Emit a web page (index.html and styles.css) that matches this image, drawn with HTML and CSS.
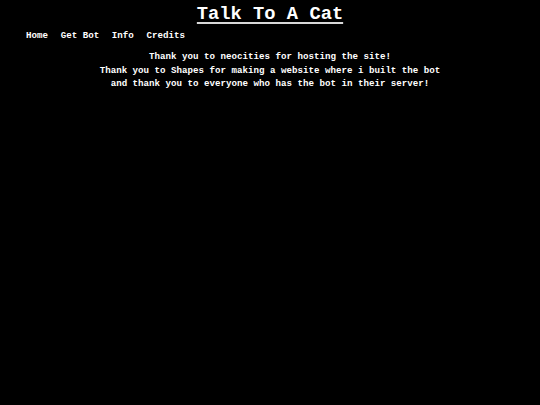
FILE: index.html
```html
<!DOCTYPE html>
<html>
<head>
<meta charset="utf-8">
<title>Talk To A Cat</title>
<link rel="stylesheet" href="styles.css">
</head>
<body>
<header class="top">
  <h1 class="title">Talk To A Cat</h1>
  <nav class="nav">
    <a class="nav-link" href="#">Home</a>
    <a class="nav-link" href="#">Get Bot</a>
    <a class="nav-link" href="#">Info</a>
    <a class="nav-link" href="#">Credits</a>
  </nav>
</header>
<main class="credits">
  <p class="line">Thank you to neocities for hosting the site!</p>
  <p class="line">Thank you to Shapes for making a website where i built the bot</p>
  <p class="line">and thank you to everyone who has the bot in their server!</p>
</main>
</body>
</html>
```
FILE: styles.css
```css
html, body {
  background: #000;
}
body {
  margin: 0;
  color: #fff;
  font-family: "Liberation Mono", "DejaVu Sans Mono", monospace;
  font-weight: bold;
}
.top {
  padding-top: 3px;
}
.title {
  margin: 0;
  text-align: center;
  font-size: 18.75px;
  line-height: 22px;
  font-weight: bold;
  text-decoration: underline;
  text-decoration-color: #d8d8d8;
  text-underline-offset: 3px;
  text-decoration-thickness: 1.5px;
}
.nav {
  display: flex;
  gap: 12.7px;
  padding: 4px 0 0 26px;
  font-size: 9.17px;
  line-height: 14px;
}
.nav-link {
  color: #fff;
  text-decoration: none;
}
.credits {
  padding-top: 7px;
  text-align: center;
  font-size: 9.17px;
  line-height: 13.6px;
}
.line {
  margin: 0;
}
```
